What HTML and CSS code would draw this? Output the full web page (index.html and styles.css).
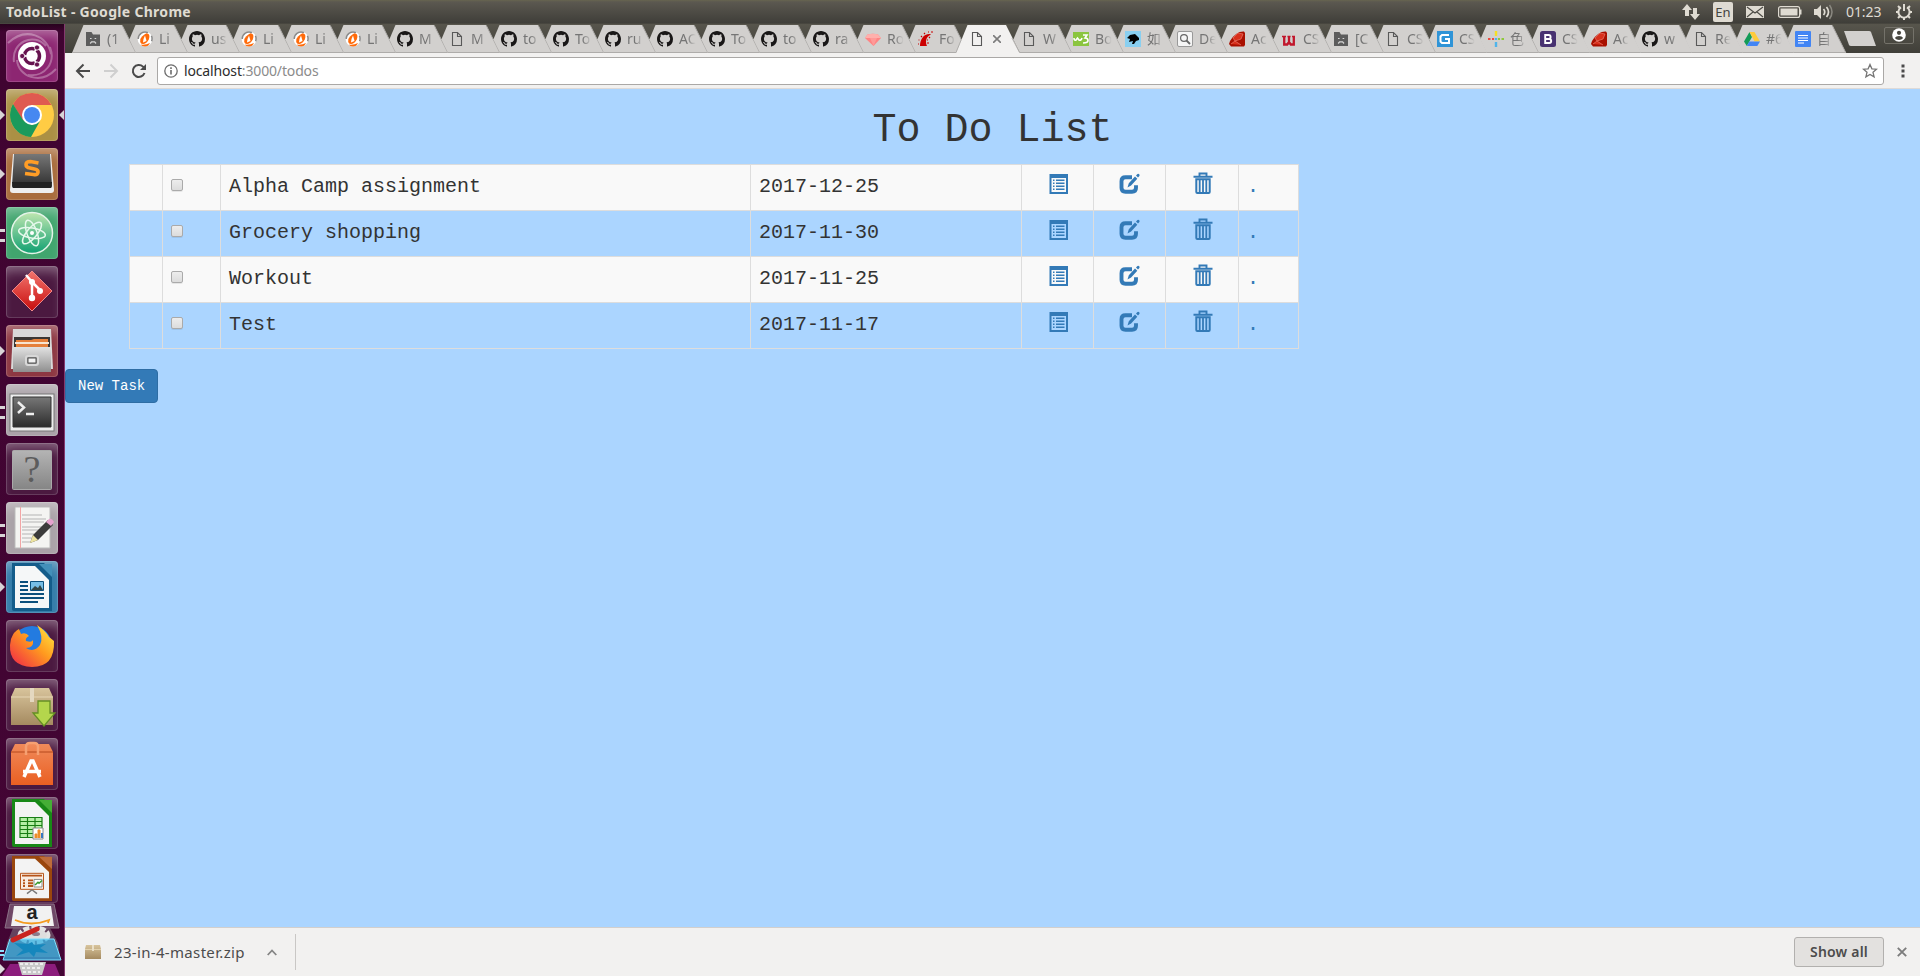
FILE: index.html
```html
<!DOCTYPE html>
<html lang="en">
<head>
<meta charset="utf-8">
<title>TodoList</title>
<link rel="stylesheet" href="styles.css">
</head>
<body>
<svg class="defs" width="0" height="0" aria-hidden="true">
  <defs>
    <linearGradient id="gGrey" x1="0" y1="0" x2="0" y2="1"><stop offset="0" stop-color="#e2e2e2"/><stop offset="1" stop-color="#8f8f8f"/></linearGradient>
    <linearGradient id="gDull" x1="0" y1="0" x2="0" y2="1"><stop offset="0" stop-color="#b4b4b4"/><stop offset="1" stop-color="#858585"/></linearGradient>
    <linearGradient id="gDark" x1="0" y1="0" x2="0" y2="1"><stop offset="0" stop-color="#777"/><stop offset="1" stop-color="#2c2c2c"/></linearGradient>
    <linearGradient id="gAtom" x1="0" y1="0" x2="0" y2="1"><stop offset="0" stop-color="#bfe6b0"/><stop offset="1" stop-color="#0fa071"/></linearGradient>
    <linearGradient id="gRed" x1="0" y1="0" x2="0" y2="1"><stop offset="0" stop-color="#f2756e"/><stop offset="1" stop-color="#c80d0d"/></linearGradient>
    <linearGradient id="gBox" x1="0" y1="0" x2="0" y2="1"><stop offset="0" stop-color="#d8c49c"/><stop offset="1" stop-color="#a58a60"/></linearGradient>
    <linearGradient id="gFox" x1="1" y1="0" x2="0" y2="1"><stop offset="0" stop-color="#fff044"/><stop offset=".45" stop-color="#ff9a1f"/><stop offset="1" stop-color="#f0204a"/></linearGradient>
    <linearGradient id="gBag" x1="0" y1="0" x2="0" y2="1"><stop offset="0" stop-color="#f08a5a"/><stop offset="1" stop-color="#ea5f22"/></linearGradient>
  </defs>
  <symbol id="tab" viewBox="0 0 66 28"><path d="M11.5 0H50L64 28H12L5.3 14.6z" fill="#d2d0ce"/><path d="M50.3 .5L63.7 27.5H12" fill="none" stroke="#aeacaa"/></symbol>
  <symbol id="tab-first" viewBox="0 0 66 28"><path d="M0 28L11.5 0H50L64 28z" fill="#d2d0ce"/><path d="M50.3 .5L63.7 27.5H0" fill="none" stroke="#aeacaa"/></symbol>
  <symbol id="tab-active" viewBox="0 0 66 28"><path d="M0 28L11.5 0H50L64 28z" fill="#f2f1f0"/><path d="M0 27.5L5.3 14.6M56 13L63.5 27.5" fill="none" stroke="#aeacaa"/></symbol>
  <symbol id="sad" viewBox="0 0 16 16"><path d="M1 1h5.500l1.500 2.500h7V15H1z" fill="#5c5c5c"/><path d="M5 7.500h1.600M9.600 7.500h1.600M5.200 12.500l1.400-1.700h3l1.400 1.700" fill="none" stroke="#d6d6d6" stroke-width="1.200"/></symbol>
  <symbol id="lh" viewBox="0 0 16 16"><circle cx="8" cy="8" r="7.400" fill="#fff"/><path d="M1.200 8A6.900 6.900 0 0 1 11 1.600M14.400 4.800a6.900 6.900 0 0 1 .2 5.400" fill="none" stroke="#8a8a8a" stroke-width="1.500"/><path d="M9.500 2.200Q13 2.500 12.300 6.500T8 12.500Q4 14 3.200 11T5 5.500 9.500 2.200z" fill="#ff6b0b"/><path d="M6 11.500Q6 8 8 4.500 9 8 9.500 10z" fill="#fff"/><path d="M3.500 13.500q5 .8 9.500-1.500-1.500 3.500-5 3.600-3-.1-4.500-2.100z" fill="#ff6b0b"/></symbol>
  <symbol id="gh" viewBox="0 0 16 16"><path fill="#191717" fill-rule="evenodd" d="M8 0C3.58 0 0 3.58 0 8c0 3.54 2.29 6.53 5.47 7.59.4.07.55-.17.55-.38 0-.19-.01-.82-.01-1.49-2.01.37-2.53-.49-2.69-.94-.09-.23-.48-.94-.82-1.13-.28-.15-.68-.52-.01-.53.63-.01 1.08.58 1.23.82.72 1.21 1.87.87 2.33.66.07-.52.28-.87.51-1.07-1.78-.2-3.64-.89-3.64-3.95 0-.87.31-1.59.82-2.15-.08-.2-.36-1.02.08-2.12 0 0 .67-.21 2.2.82a7.6 7.6 0 0 1 4 0c1.53-1.04 2.2-.82 2.2-.82.44 1.1.16 1.92.08 2.12.51.56.82 1.27.82 2.15 0 3.07-1.87 3.75-3.65 3.95.29.25.54.73.54 1.48 0 1.07-.01 1.93-.01 2.2 0 .21.15.46.55.38A8 8 0 0 0 16 8c0-4.42-3.58-8-8-8z"/></symbol>
  <symbol id="doc" viewBox="0 0 16 16"><path d="M3.500 1.500h5l4 4v9h-9zM8.500 1.500v4h4" fill="none" stroke="#595959" stroke-width="1.100"/></symbol>
  <symbol id="gem" viewBox="0 0 16 16"><path d="M0 7l2.500-3.500Q8 2 13 3.500L16 7l-7.500 8z" fill="#ff8484"/><path d="M0 7h16L13 3.500Q8 2 2.500 3.500z" fill="#ffb0ac"/><path d="M5 7l3.500 8L12 7" fill="#ff9a98"/></symbol>
  <symbol id="rails" viewBox="0 0 16 16"><path d="M3 15C3 8 7 2 14 3l-1 1C9 6 8 11 10 15z" fill="#c00"/><path d="M1 13h1M1.500 9h1M4 5l1 1M7 2l1 1M11 1h1M14 1h2M10 9h1M12 6l1 1M10 12h2" stroke="#c00" stroke-width="1.200"/></symbol>
  <symbol id="w3" viewBox="0 0 16 16"><path d="M0 1h16v14H0z" fill="#8bc53f"/><path d="M1 7q0 3 2 2l1.500-2L6 9q2 1 3-2M10 4h4l-2 3q3 0 3 2.500T10 12" fill="none" stroke="#fff" stroke-width="1.600"/></symbol>
  <symbol id="bird" viewBox="0 0 16 16"><path d="M0 0h16v16H0z" fill="#89cff0"/><path d="M2 7l3-3 5-1 4 4v2l-3 1-2 3H7l1-3-4 1 1-3z" fill="#000"/></symbol>
  <symbol id="find" viewBox="0 0 16 16"><rect x=".5" y=".5" width="15" height="15" rx="1.500" fill="#f5f5f5" stroke="#999"/><circle cx="7" cy="7" r="3.400" fill="none" stroke="#666" stroke-width="1.200"/><path d="M9.500 9.500l3.500 3.500" stroke="#666" stroke-width="1.800"/></symbol>
  <symbol id="ruby" viewBox="0 0 16 16"><path d="M1 10Q7 0 15 .5L16 2v12l-1 1.500H2L0 13z" fill="#a91000"/><path d="M4 7l5-5 5 1-2 5-6 2zM2 13l4-3 6 4" fill="#d9301c" stroke="#ed7768" stroke-width=".7"/></symbol>
  <symbol id="wd" viewBox="0 0 16 16"><path d="M3.200 5v8.500h3L8 11l1.800 2.500h3V5M8 5v7" fill="none" stroke="#c1172c" stroke-width="2.300"/><path d="M1 5.500h4M6.500 5.500h3M11 5.500h3" stroke="#c1172c" stroke-width="1.400"/></symbol>
  <symbol id="gg" viewBox="0 0 16 16"><path d="M0 0h16v16H0z" fill="#2f94d7"/><path d="M12 4H5L3.500 5.500v5L5 12h7V8H8" fill="none" stroke="#fff" stroke-width="2"/></symbol>
  <symbol id="plus" viewBox="0 0 16 16"><path d="M8 0v5" stroke="#f5df25" stroke-width="2.400"/><path d="M8 11v5M8 7v2" stroke="#50b4ea" stroke-width="2.400"/><path d="M0 8h2.500M4 8h2" stroke="#ee4b40" stroke-width="2.200"/><path d="M10 8h2M13.500 8H16" stroke="#8fc93a" stroke-width="2.200"/></symbol>
  <symbol id="boot" viewBox="0 0 16 16"><rect width="16" height="16" rx="2.500" fill="#483271"/><path d="M5.200 4v8h4q2 0 2-2T9 8H5.500 8.700q1.900 0 1.900-2T8.700 4z" fill="none" stroke="#fff" stroke-width="1.900"/></symbol>
  <symbol id="drive" viewBox="0 0 16 16"><path d="M5.500 1L0 10.500 2.800 15 8 6z" fill="#139b58"/><path d="M5.500 1h5L16 10.500h-5.400z" fill="#ffcb3b"/><path d="M5.400 10.500H16L13.300 15H2.800z" fill="#4285f4"/></symbol>
  <symbol id="gdoc" viewBox="0 0 16 16"><rect width="16" height="16" rx="1" fill="#4285f4"/><path d="M3 4.500h10M3 7h10M3 9.500h10M3 12h6" stroke="#fff" stroke-width="1.200"/></symbol>
  <symbol id="i-list" viewBox="0 0 20 22"><path fill-rule="evenodd" d="M.5 2H19v20H.5zM2.500 6v14h14.500V6z"/><path d="M4 7.500h1.500V9H4zM7 7.500h8.500V9H7zM4 10.500h1.500V12H4zM7 10.500h8.500V12H7zM4 13.500h1.500V15H4zM7 13.500h8.500V15H7zM4 16.500h1.500V18H4zM7 16.500h8.500V18H7z"/></symbol>
  <symbol id="i-edit" viewBox="0 0 22 22"><path d="M13 5.200H6.500q-4 0-4 4v6.500q0 4 4 4h6.500q4 0 4-4v-2.500" fill="none" stroke="currentColor" stroke-width="3.900"/><path d="M8.500 15.500l1.300-4.300 6.200-6.700 2.300 2.300-6.200 6.700zM17 3.500l1.500-1.500q1-.5 1.700.2t.2 1.700L19 5.500z"/></symbol>
  <symbol id="i-trash" viewBox="0 0 20 22"><path d="M.5 4.700h19M6.500 4V1.500h7V4" fill="none" stroke="currentColor" stroke-width="1.900"/><path d="M3.300 7.300h13.400V20q0 1-1 1H4.300q-1 0-1-1z" fill="none" stroke="currentColor" stroke-width="2"/><path d="M6.700 8v12M10 8v12M13.300 8v12" stroke="currentColor" stroke-width="1.800"/></symbol>
</svg>

<header class="panel">
  <span class="panel-title">TodoList - Google Chrome</span>
  <svg class="tray-arrows" width="20" height="18" viewBox="0 0 20 18"><path d="M6 1L1 7h3v6h4V7h3zM14 17l5-6h-3V5h-4v6H9z" fill="#dfdbd2"/></svg>
  <span class="tray-lang">En</span>
  <svg class="tray-mail" width="18" height="12" viewBox="0 0 18 12"><path d="M0 0h18v12H0z" fill="#dfdbd2"/><path d="M1 1l8 6 8-6M1 11l6-5M17 11l-6-5" fill="none" stroke="#4b4a44" stroke-width="1.100"/></svg>
  <svg class="tray-batt" width="24" height="12" viewBox="0 0 24 12"><rect x=".6" y=".6" width="21" height="10.800" rx="2" fill="none" stroke="#dfdbd2" stroke-width="1.200"/><path d="M2.500 2.500h17v7h-17zM22 3.500h1.500v5H22z" fill="#dfdbd2"/></svg>
  <svg class="tray-vol" width="20" height="16" viewBox="0 0 20 16"><path d="M0 5h3l4-4v14l-4-4H0z" fill="#dfdbd2"/><path d="M9.500 5q2.500 3 0 6M12.500 3q4 5 0 10" fill="none" stroke="#dfdbd2" stroke-width="1.700"/><path d="M15.500 1q5 7 0 14" fill="none" stroke="#8a8880" stroke-width="1.500"/></svg>
  <span class="tray-clock">01:23</span>
  <svg class="tray-gear" width="18" height="18" viewBox="0 0 18 18"><g fill="none" stroke="#dfdbd2" stroke-width="2"><path d="M6 4.300a5.600 5.600 0 1 0 6 0M9 1v7"/><path d="M1 9h3M14 9h3M3 3l2.500 2.500M15 3l-2.500 2.500M3 15l2.500-2.500M15 15l-2.500-2.500M9 14v3"/></g></svg>
</header>

<div class="desktop">
  <nav class="launcher">
    <div class="tile t-dash"><svg viewBox="0 0 52 52"><g fill="none" stroke="#fff" stroke-opacity=".3" stroke-width="2"><path d="M8 32C5 12 28 2 40 16M44 17c6 16-5 30-22 28M2 13C20-4 42 6 45 24M50 39C34 56 12 46 11 30"/></g><circle cx="26" cy="26" r="14" fill="#fff"/><circle cx="26" cy="26" r="7.500" fill="none" stroke="#66134f" stroke-width="3.500" stroke-dasharray="13.700 2" stroke-dashoffset="7"/><g fill="#66134f" stroke="#fff" stroke-width=".8"><circle cx="16.200" cy="26" r="2.600"/><circle cx="31" cy="17.500" r="2.600"/><circle cx="31" cy="34.500" r="2.600"/></g></svg></div>
    <div class="tile t-chrome run focus"><svg viewBox="0 0 52 52"><circle cx="26" cy="26" r="22" fill="#fc4"/><path d="M26 4A22 22 0 0 1 45.500 16H26L17 32 7 15A22 22 0 0 1 26 4z" fill="#df5a50"/><path d="M7 15a22 22 0 0 0 18 33l9-16-8 4-9-5z" fill="#1a9a5c"/><circle cx="26" cy="26" r="10" fill="#fff"/><circle cx="26" cy="26" r="8" fill="#4688f1"/></svg></div>
    <div class="tile t-sublime run"><svg viewBox="0 0 52 52"><path d="M7 6h38l3 36q0 3-3 3H7q-3 0-3-3z" fill="#eee"/><path d="M8 6h36l2 32q0 2-2 2H8q-2 0-2-2z" fill="url(#gDark)"/><path d="M6 34h40l-1 6H7z" fill="#222"/><path d="M32.500 15l-8-1.500q-4.500 0-4.500 3t4 3.500l4.500 1q4 .8 3.500 3.500t-4.500 2L19 25.500" fill="none" stroke="#ff9d26" stroke-width="3.600"/></svg></div>
    <div class="tile t-atom multi"><svg viewBox="0 0 52 52"><circle cx="26" cy="26" r="20.500" fill="url(#gAtom)" stroke="#e4f4e8" stroke-width="1.500"/><g fill="none" stroke="#e6f8ec" stroke-width="1.500"><ellipse cx="26" cy="26" rx="13.500" ry="5" transform="rotate(10 26 26)"/><ellipse cx="26" cy="26" rx="13.500" ry="5" transform="rotate(70 26 26)"/><ellipse cx="26" cy="26" rx="13.500" ry="5" transform="rotate(130 26 26)"/></g><circle cx="26" cy="26" r="2" fill="#fff"/></svg></div>
    <div class="tile t-plain"><svg viewBox="0 0 52 52"><path d="M26 5l20 20-20 20L6 25z" fill="url(#gRed)" stroke="#e88" stroke-width="1"/><path d="M20 9l6 7v16M26 16l8 8" fill="none" stroke="#fff" stroke-width="2.500"/><g fill="#fff"><circle cx="26" cy="16" r="3"/><circle cx="34" cy="25" r="3"/><circle cx="26" cy="32" r="3.200"/></g></svg></div>
    <div class="tile t-files run"><svg viewBox="0 0 52 52"><path d="M7 4h38l2 40H5z" fill="#d9d9d9"/><path d="M8 12h36v14H8z" fill="#3b3735"/><path d="M10 15h15l3-1h14v11H10z" fill="#e5803b"/><path d="M9 17h34v2H9z" fill="#f7e4d0"/><path d="M7 22h38v25H7z" fill="url(#gGrey)"/><rect x="20" y="31" width="12" height="9" rx="2" fill="#8f8f8f" stroke="#d8d8d8" stroke-width="2"/><path d="M22 33h8v5h-8z" fill="#f2f2f2" stroke="#555"/></svg></div>
    <div class="tile t-grey multi"><svg viewBox="0 0 52 52"><rect x="4" y="10" width="44" height="37" fill="#ededed" stroke="#777"/><path d="M7 13h38v30H7z" fill="url(#gDark)" stroke="#333"/><path d="M12 18l6 5.500-6 5.500M20 30h8" fill="none" stroke="#eee" stroke-width="2.500"/></svg></div>
    <div class="tile t-plain"><svg viewBox="0 0 52 52"><rect x="6.500" y="7.500" width="39" height="39" rx="1" fill="url(#gDull)" stroke="#aaa"/><text x="26" y="39" text-anchor="middle" class="g-q">?</text></svg></div>
    <div class="tile t-grey multi"><svg viewBox="0 0 52 52"><path d="M9 5h35v41H9z" fill="#f4f4f2" stroke="#bbb"/><path d="M14.500 5v41" stroke="#f2a5a5"/><path d="M16 13h20M16 17h24M16 20h22M16 25h24M16 28h18M16 32h12M16 36h10M16 40h8" stroke="#b4b4b4"/><path d="M24 41l3-8 15-15 5 5-15 15z" fill="#3b3b3b"/><path d="M24 41l3-8 5 5z" fill="#ede3a0"/><path d="M40 20l3-3q3-1 5 3l-3 4z" fill="#e7a3cf"/></svg></div>
    <div class="tile t-writer run"><svg viewBox="0 0 52 52"><path d="M6 2h32l8 9v39H8q-2 0-2-2z" fill="#145c8a"/><path d="M9 5h20l14 14v28H9z" fill="#f5f7f8"/><path d="M33 3h13v13z" fill="#438fba"/><path d="M14 21h8M14 25h8M14 29h8M14 33h24M14 37h24M14 41h18" stroke="#0b4f7c" stroke-width="2"/><path d="M24.500 20.500h13v9h-13z" fill="#76bde5" stroke="#0b4f7c"/><path d="M25 29l4-4 3 2 2-3 3 5z" fill="#344"/></svg></div>
    <div class="tile t-plain"><svg viewBox="0 0 52 52"><circle cx="26" cy="26" r="20" fill="#237be0"/><path d="M5 19q3-8 8-10l2 5q5-2 8 2-4 2-3 5 6 2 7-1 1 8-7 8 8 5 14-3 4-8-3-20 9 6 12 12l5 4q1 26-22 26Q3 46 4 25z" fill="url(#gFox)"/></svg></div>
    <div class="tile t-plain"><svg viewBox="0 0 52 52"><path d="M9 9h34l4 9v28H5V18z" fill="url(#gBox)"/><path d="M5 18h42" stroke="#e6d6b4"/><path d="M24 9h4v14h-4z" fill="#e4d8c0"/><path d="M32 22h12v12h5L38 47 27 34h5z" fill="#b4d64c" stroke="#658f24" stroke-width="1.300"/></svg></div>
    <div class="tile t-plain"><svg viewBox="0 0 52 52"><path d="M5 14l4-8h34l4 8v33H5z" fill="url(#gBag)"/><path d="M5 14h42" stroke="#b4481c"/><path d="M20 17V9q0-4 4-4h4q4 0 4 4v8" fill="none" stroke="#f5a072" stroke-width="2.500"/><path d="M18 39l7-16h2l7 16M17 33.500h18" fill="none" stroke="#fff" stroke-width="3.500"/></svg></div>
    <div class="tile t-plain"><svg viewBox="0 0 52 52"><path d="M6 2h32l8 9v39H8q-2 0-2-2z" fill="#188817"/><path d="M9 5h20l14 14v28H9z" fill="#f3f3f3"/><path d="M33 3h13v13z" fill="#45ae36"/><path d="M14 20h22v21H14z" fill="#b5efa6"/><path d="M14 20.500h22v20H14zM14 24.500h22M14 28.500h22M14 32.500h22M14 36.500h22M21.500 20v21M29 20v21" fill="none" stroke="#187d14" stroke-width="1.200"/><path d="M27 31h10v11H27z" fill="#fff" stroke="#888"/><path d="M29 41v-4h2v4M32 41v-8h2v8" fill="#ed8d28" stroke="#ed8d28"/><path d="M36 41v-5" stroke="#3678c5" stroke-width="2"/></svg></div>
    <div class="tile t-plain t-short"><svg viewBox="0 0 52 52" preserveAspectRatio="none"><path d="M6 2h32l8 9v39H8q-2 0-2-2z" fill="#9a460d"/><path d="M9 5h20l14 14v28H9z" fill="#f3f3f3"/><path d="M33 3h13v13z" fill="#bd6c3b"/><path d="M14.500 20.500h23v17h-23z" fill="#f8ece2" stroke="#b65319"/><path d="M16 23h20M22 28h5M22 31h5M22 34h5M17 28h2M17 31h2M17 34h2" stroke="#b65319" stroke-width="2"/><path d="M28 27h8v8h-8z" fill="#fff" stroke="#888"/><path d="M29 33l3-3 1 1 3-3" fill="none" stroke="#3a9a2e" stroke-width="1.500"/><path d="M21 42l5-4 5 4" fill="none" stroke="#777" stroke-width="1.500"/></svg></div>
    <svg class="folded" width="64" height="73" viewBox="0 0 64 73">
      <path d="M10 1h44l5 24H5z" fill="#a79ba6" fill-opacity=".45" stroke="#8b7287"/><path d="M14 3h37l3 20H11z" fill="#f1f1f1"/>
      <text x="32" y="16" text-anchor="middle" class="g-amz">a</text><path d="M15 17q16 7 34 0l-1 3" fill="none" stroke="#f39a1e" stroke-width="1.800"/>
      <path d="M7 40l6-15h37l8 15 2 14H5z" fill="#7d6a7c" fill-opacity=".6"/><ellipse cx="34" cy="32" rx="14" ry="7" fill="none" stroke="#e4e4e4" stroke-width="5" stroke-dasharray="6 2"/><ellipse cx="34" cy="32" rx="13" ry="6" fill="#dedede"/><ellipse cx="36" cy="31" rx="4" ry="2" fill="#8b7b8b"/>
      <path d="M10 36h44l7 21H3z" fill="#37b4e6" fill-opacity=".75" stroke="#7fe0ff"/><path d="M14 40l14 1 4-2 2 3 12-1-6 4 8 5-12-1-2 5-5-5-13 4 7-6z" fill="#1587bd"/>
      <path d="M13 37l24-11" stroke="#c9231f" stroke-width="5" stroke-linecap="round"/>
      <path d="M10 61h45l5 12H2z" fill="#8c1c7c"/><path d="M18 59h28l-4 13H22z" fill="#c9c9c9"/><path d="M20 61h24M22 65h20M23 69h17" stroke="#eee" stroke-width="2" stroke-dasharray="3 2"/>
      <path d="M0 48h4M0 52h4" stroke="#8fe0ff" stroke-width="2"/><path d="M0 61l5 5-5 5z" fill="#ddd"/>
    </svg>
  </nav>

  <div class="browser">
    <div class="tabstrip">
      <div class="tab"><svg class="shape"><use href="#tab-first"/></svg><svg class="fav"><use href="#sad"/></svg><span>(1</span></div>
      <div class="tab"><svg class="shape"><use href="#tab"/></svg><svg class="fav"><use href="#lh"/></svg><span>Li</span></div>
      <div class="tab"><svg class="shape"><use href="#tab"/></svg><svg class="fav"><use href="#gh"/></svg><span>us</span></div>
      <div class="tab"><svg class="shape"><use href="#tab"/></svg><svg class="fav"><use href="#lh"/></svg><span>Li</span></div>
      <div class="tab"><svg class="shape"><use href="#tab"/></svg><svg class="fav"><use href="#lh"/></svg><span>Li</span></div>
      <div class="tab"><svg class="shape"><use href="#tab"/></svg><svg class="fav"><use href="#lh"/></svg><span>Li</span></div>
      <div class="tab"><svg class="shape"><use href="#tab"/></svg><svg class="fav"><use href="#gh"/></svg><span>M</span></div>
      <div class="tab"><svg class="shape"><use href="#tab"/></svg><svg class="fav"><use href="#doc"/></svg><span>M</span></div>
      <div class="tab"><svg class="shape"><use href="#tab"/></svg><svg class="fav"><use href="#gh"/></svg><span>to</span></div>
      <div class="tab"><svg class="shape"><use href="#tab"/></svg><svg class="fav"><use href="#gh"/></svg><span>To</span></div>
      <div class="tab"><svg class="shape"><use href="#tab"/></svg><svg class="fav"><use href="#gh"/></svg><span>ru</span></div>
      <div class="tab"><svg class="shape"><use href="#tab"/></svg><svg class="fav"><use href="#gh"/></svg><span>AC</span></div>
      <div class="tab"><svg class="shape"><use href="#tab"/></svg><svg class="fav"><use href="#gh"/></svg><span>To</span></div>
      <div class="tab"><svg class="shape"><use href="#tab"/></svg><svg class="fav"><use href="#gh"/></svg><span>to</span></div>
      <div class="tab"><svg class="shape"><use href="#tab"/></svg><svg class="fav"><use href="#gh"/></svg><span>ra</span></div>
      <div class="tab"><svg class="shape"><use href="#tab"/></svg><svg class="fav"><use href="#gem"/></svg><span>Ro</span></div>
      <div class="tab"><svg class="shape"><use href="#tab"/></svg><svg class="fav"><use href="#rails"/></svg><span>Fo</span></div>
      <div class="tab active"><svg class="shape"><use href="#tab-active"/></svg><svg class="fav"><use href="#doc"/></svg><svg class="tab-close" viewBox="0 0 8 8"><path d="M0 0l8 8M8 0L0 8" stroke="#7c7c7c" stroke-width="1.600"/></svg></div>
      <div class="tab"><svg class="shape"><use href="#tab"/></svg><svg class="fav"><use href="#doc"/></svg><span>W</span></div>
      <div class="tab"><svg class="shape"><use href="#tab"/></svg><svg class="fav"><use href="#w3"/></svg><span>Bo</span></div>
      <div class="tab"><svg class="shape"><use href="#tab"/></svg><svg class="fav"><use href="#bird"/></svg><span>如</span></div>
      <div class="tab"><svg class="shape"><use href="#tab"/></svg><svg class="fav"><use href="#find"/></svg><span>De</span></div>
      <div class="tab"><svg class="shape"><use href="#tab"/></svg><svg class="fav"><use href="#ruby"/></svg><span>Ac</span></div>
      <div class="tab"><svg class="shape"><use href="#tab"/></svg><svg class="fav"><use href="#wd"/></svg><span>CS</span></div>
      <div class="tab"><svg class="shape"><use href="#tab"/></svg><svg class="fav"><use href="#sad"/></svg><span>[C</span></div>
      <div class="tab"><svg class="shape"><use href="#tab"/></svg><svg class="fav"><use href="#doc"/></svg><span>CS</span></div>
      <div class="tab narrow"><svg class="shape"><use href="#tab"/></svg><svg class="fav"><use href="#gg"/></svg><span>CS</span></div>
      <div class="tab"><svg class="shape"><use href="#tab"/></svg><svg class="fav"><use href="#plus"/></svg><span>色</span></div>
      <div class="tab narrow"><svg class="shape"><use href="#tab"/></svg><svg class="fav"><use href="#boot"/></svg><span>CS</span></div>
      <div class="tab narrow"><svg class="shape"><use href="#tab"/></svg><svg class="fav"><use href="#ruby"/></svg><span>Ac</span></div>
      <div class="tab narrow"><svg class="shape"><use href="#tab"/></svg><svg class="fav"><use href="#gh"/></svg><span>w</span></div>
      <div class="tab narrow"><svg class="shape"><use href="#tab"/></svg><svg class="fav"><use href="#doc"/></svg><span>Re</span></div>
      <div class="tab narrow"><svg class="shape"><use href="#tab"/></svg><svg class="fav"><use href="#drive"/></svg><span>#6</span></div>
      <div class="tab narrow"><svg class="shape"><use href="#tab"/></svg><svg class="fav"><use href="#gdoc"/></svg><span>自</span></div>
      <svg class="new-tab" width="34" height="16" viewBox="0 0 34 16"><path d="M1 0h25q1.500 0 2 1l5 14H8q-1.500 0-2-1z" fill="#d2d0ce"/></svg>
      <div class="profile"><svg width="14" height="14" viewBox="0 0 14 14"><circle cx="7" cy="7" r="6.800" fill="#fff"/><circle cx="7" cy="4.800" r="2.100" fill="#484740"/><path d="M2.800 10q1.200-2 4.200-2t4.200 2Q9.500 12 7 12t-4.200-2z" fill="#484740"/></svg></div>
    </div>
    <div class="toolbar">
      <svg class="nav" viewBox="0 0 16 16"><path d="M15 8H2M8.500 1.500L2 8l6.500 6.500" fill="none" stroke="#4a4a4a" stroke-width="2"/></svg>
      <svg class="nav" viewBox="0 0 16 16"><path d="M1 8h13M7.500 1.500L14 8l-6.500 6.500" fill="none" stroke="#cfcfcf" stroke-width="2"/></svg>
      <svg class="nav" viewBox="0 0 16 16"><path d="M13.500 10A6 6 0 1 1 12 3.600L13.500 5" fill="none" stroke="#4a4a4a" stroke-width="2"/><path d="M15 1v6H9z" fill="#4a4a4a"/></svg>
      <div class="omnibox">
        <svg class="info" viewBox="0 0 14 14"><circle cx="7" cy="7" r="6.200" fill="none" stroke="#6c6c6c" stroke-width="1.300"/><path d="M7 6v4.500M7 3.300v1.600" stroke="#6c6c6c" stroke-width="1.600"/></svg>
        <span class="url"><b>localhost</b>:3000/todos</span>
        <svg class="star" viewBox="0 0 16 16"><path d="M8 1.500l1.900 4.300 4.600.4-3.500 3.100 1.100 4.600L8 11.500l-4.100 2.400L5 9.300 1.500 6.200l4.600-.4z" fill="none" stroke="#757575" stroke-width="1.300"/></svg>
      </div>
      <svg class="menu" viewBox="0 0 4 14"><path d="M.5 .5h3v3h-3zM.5 5.500h3v3h-3zM.5 10.500h3v3h-3z" fill="#4a4a4a"/></svg>
    </div>

    <main class="page">
      <h1>To Do List</h1>
      <table class="todos">
        <colgroup><col class="c-pad"><col class="c-check"><col class="c-name"><col class="c-date"><col class="c-ico"><col class="c-ico"><col class="c-del"><col class="c-dot"></colgroup>
        <tr><td></td><td><span class="check"></span></td><td>Alpha Camp assignment</td><td>2017-12-25</td><td class="ico"><svg class="list"><use href="#i-list"/></svg></td><td class="ico"><svg class="edit"><use href="#i-edit"/></svg></td><td class="ico"><svg class="trash"><use href="#i-trash"/></svg></td><td class="dot">.</td></tr>
        <tr><td></td><td><span class="check"></span></td><td>Grocery shopping</td><td>2017-11-30</td><td class="ico"><svg class="list"><use href="#i-list"/></svg></td><td class="ico"><svg class="edit"><use href="#i-edit"/></svg></td><td class="ico"><svg class="trash"><use href="#i-trash"/></svg></td><td class="dot">.</td></tr>
        <tr><td></td><td><span class="check"></span></td><td>Workout</td><td>2017-11-25</td><td class="ico"><svg class="list"><use href="#i-list"/></svg></td><td class="ico"><svg class="edit"><use href="#i-edit"/></svg></td><td class="ico"><svg class="trash"><use href="#i-trash"/></svg></td><td class="dot">.</td></tr>
        <tr><td></td><td><span class="check"></span></td><td>Test</td><td>2017-11-17</td><td class="ico"><svg class="list"><use href="#i-list"/></svg></td><td class="ico"><svg class="edit"><use href="#i-edit"/></svg></td><td class="ico"><svg class="trash"><use href="#i-trash"/></svg></td><td class="dot">.</td></tr>
      </table>
      <a class="btn">New Task</a>
    </main>

    <footer class="downloads">
      <svg class="zip" viewBox="0 0 16 14"><path d="M1 0h14l1 4v10H0V4z" fill="url(#gBox)"/><path d="M0 4.500h16" stroke="#e2d2ae"/><path d="M7 0h2v6H7z" fill="#e9dec6"/></svg>
      <span class="file">23-in-4-master.zip</span>
      <svg class="chev" viewBox="0 0 10 7"><path d="M.7 6L5 1.500 9.300 6" fill="none" stroke="#858585" stroke-width="1.800"/></svg>
      <i class="rule"></i>
      <button class="show-all">Show all</button>
      <svg class="close" viewBox="0 0 10 10"><path d="M.8 .8l8.400 8.400M9.200 .8L.8 9.200" stroke="#7c7c7c" stroke-width="1.900"/></svg>
    </footer>
  </div>
</div>
</body>
</html>
```
FILE: styles.css
```css
* { box-sizing: border-box; }
html, body { height: 100%; }
body { margin: 0; display: flex; flex-direction: column; overflow: hidden; font-family: "Noto Sans", "Open Sans", "Noto Sans CJK TC", sans-serif; }
.defs { position: absolute; }
svg { display: block; flex: none; }

/* Desktop top panel */
.panel { height: 24px; flex: none; display: flex; align-items: center; padding: 0 7px 0 6px; background: linear-gradient(#67654f 0, #5b5850 2px, #3f3e39 23px, #504e45 24px); color: #dfdbd2; }
.panel-title { font-size: 14px; font-weight: 700; line-height: 24px; letter-spacing: .3px; margin-right: auto; white-space: nowrap; }
.tray-arrows { margin-right: 12px; }
.tray-lang { width: 20px; height: 20px; border-radius: 2px; background: #dfdbd2; color: #45443f; font-size: 13px; line-height: 20px; text-align: center; margin-right: 13px; }
.tray-mail { margin-right: 14px; }
.tray-batt { margin-right: 12px; }
.tray-vol { margin-right: 12px; }
.tray-clock { width: 37px; font-size: 14px; line-height: 24px; letter-spacing: -.1px; margin-right: 12px; white-space: nowrap; }

.desktop { flex: 1; min-height: 0; display: flex; }

/* Launcher */
.launcher { width: 65px; flex: none; padding: 6px 0 0 6px; display: flex; flex-direction: column; gap: 7px; background: linear-gradient(#28031e, #400431 8px, #430534); border-right: 1px solid #84396e; position: relative; }
.tile { width: 52px; height: 52px; flex: none; border-radius: 4px; position: relative; box-shadow: inset 0 0 0 1px rgba(255,255,255,.15), inset 0 10px 12px -5px rgba(255,255,255,.35); }
.tile svg { width: 52px; height: 52px; }
.t-dash { background: #8d2672; }
.t-chrome { background: #ab9044; }
.t-sublime { background: #a96c3c; }
.t-atom { background: #41a56e; }
.t-plain { background: #4b1940; }
.t-files { background: #8d3742; }
.t-grey { background: #aaa2a8; }
.t-writer { background: #347caa; }
.t-short { height: 49px; margin-top: -2px; }
.t-short svg { height: 49px; }
.run::before { content: ""; position: absolute; left: -6px; top: 21px; border: 5px solid transparent; border-left-color: #d8d4d6; border-right: 0; }
.multi::before { content: ""; position: absolute; left: -6px; top: 22px; width: 5px; height: 7px; border-top: 3px solid #d8d4d6; border-bottom: 3px solid #d8d4d6; }
.focus::after { content: ""; position: absolute; right: -6px; top: 21px; border: 5px solid transparent; border-right-color: #d8d4d6; border-left: 0; }
.g-q { font: 38px "Liberation Serif", serif; fill: #5c5c5c; }
.g-amz { font: bold 20px "Liberation Sans", sans-serif; fill: #222; }
.folded { margin: -7px 0 0 -6px; }

.browser { flex: 1; min-width: 0; display: flex; flex-direction: column; }

/* Tabs */
.tabstrip { height: 29px; flex: none; display: flex; padding: 1px 6px 0 7px; background: linear-gradient(#57554c, #403f39); }
.tab { width: 52px; height: 28px; flex: none; position: relative; display: flex; padding-left: 13px; }
.tab.narrow { width: 51px; }
.shape { position: absolute; left: 0; top: 0; width: 66px; height: 28px; }
.active { z-index: 1; }
.fav { width: 16px; height: 16px; margin-top: 6px; position: relative; }
.tab span { width: 17px; margin-left: 6px; position: relative; overflow: hidden; white-space: nowrap; font-size: 14px; line-height: 28px; color: #757575; -webkit-mask-image: linear-gradient(90deg, #000 45%, transparent 98%); mask-image: linear-gradient(90deg, #000 45%, transparent 98%); }
.tab-close { width: 8px; height: 8px; margin: 10px 0 0 8px; position: relative; }
.new-tab { margin: 6px 0 0 10px; }
.profile { width: 30px; height: 17px; margin: 2px 0 0 auto; border: 1px solid #74726a; border-radius: 2px; display: flex; justify-content: center; }
.profile svg { margin-top: 0; }

/* Toolbar */
.toolbar { height: 36px; flex: none; display: flex; align-items: center; padding: 0 15px 0 10px; background: #f2f1f0; border-bottom: 1px solid #dedad8; }
.nav { width: 16px; height: 16px; margin-right: 12px; }
.omnibox { width: 1727px; height: 28px; margin-left: -2px; display: flex; align-items: center; padding: 0 5px 0 6px; background: #fff; border: 1px solid #aaa8a6; border-radius: 3px; }
.info { width: 14px; height: 14px; margin-right: 6px; }
.url { flex: 1; font-size: 14px; line-height: 26px; letter-spacing: -.15px; color: #8b8b8b; }
.url b { font-weight: 400; color: #2c2c2c; }
.star { width: 16px; height: 16px; }
.menu { width: 4px; height: 14px; margin-left: auto; }

/* To-do page */
.page { flex: 1; min-height: 0; background: #abd5ff; color: #333; font-family: "Liberation Mono", monospace; font-size: 20px; }
.page h1 { margin: 0; padding-top: 20px; height: 75px; font-size: 40px; font-weight: 400; line-height: 44px; text-align: center; }
.todos { width: 1170px; margin: 0 0 20px 64px; table-layout: fixed; border-spacing: 0; border: 1px solid #ddd; border-width: 1px 0 0 1px; }
.c-pad { width: 33px; }
.c-check { width: 58px; }
.c-name { width: 530px; }
.c-date { width: 271px; }
.c-ico { width: 72px; }
.c-del { width: 73px; }
.c-dot { width: 60px; }
.todos td { height: 46px; padding: 8px 8px 7px; line-height: 28px; vertical-align: top; border: 1px solid #ddd; border-width: 0 1px 1px 0; }
.todos tr:nth-child(odd) { background: #f9f9f9; }
.check { display: block; width: 12px; height: 12px; margin-top: 6px; border: 1px solid #aaa; border-radius: 2px; background: linear-gradient(#ededed, #dcdcdc); box-shadow: 0 1px 0 rgba(0,0,0,.08); }
.todos .ico { padding: 7px 0 0; color: #337ab7; fill: #337ab7; }
.ico svg { height: 22px; }
.list { width: 20px; margin-left: 27px; }
.edit { width: 22px; margin-left: 25px; }
.trash { width: 20px; margin-left: 27px; }
.todos .dot { color: #337ab7; }
.btn { display: inline-block; height: 34px; padding: 6px 12px; border: 1px solid #2e6da4; border-radius: 4px; background: #337ab7; color: #fff; font-size: 14px; line-height: 20px; vertical-align: top; }

/* Download shelf */
.downloads { height: 49px; flex: none; display: flex; align-items: center; padding: 0 13px 0 20px; background: #f2f1f0; border-top: 1px solid #d2cfcd; }
.zip { width: 16px; height: 14px; }
.file { width: 131px; margin: 0 22px 0 13px; font-size: 15px; line-height: 20px; letter-spacing: .33px; color: #4c4c4c; white-space: nowrap; }
.chev { width: 10px; height: 7px; }
.rule { width: 1px; height: 36px; margin-left: 18px; background: #c9c7c5; }
.show-all { width: 90px; height: 30px; margin: -1px 0 0 auto; padding: 0; border: 1px solid #b2b0ae; border-radius: 3px; background: #e3e1df; color: #4c4c4c; font: 600 14px/26px "Noto Sans", sans-serif; letter-spacing: .2px; }
.close { width: 10px; height: 10px; margin-left: 13px; }
```
